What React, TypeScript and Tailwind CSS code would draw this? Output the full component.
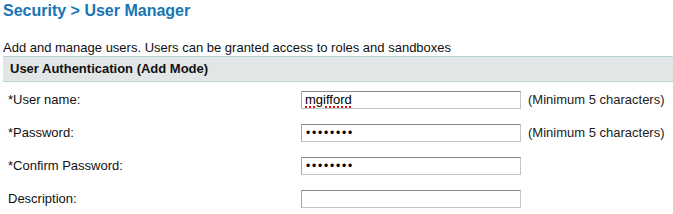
import React from "react";

function Field({ children }: { children?: React.ReactNode }) {
  return (
    <div className="w-[220px] h-[18px] border border-[#c4c4c4] border-t-[#8a8a8a] border-l-[#a8a8a8] bg-white flex items-center pl-[3px] text-[13px] leading-none text-black">
      {children}
    </div>
  );
}

function Row({ label, children, hint }: { label: string; children?: React.ReactNode; hint?: string }) {
  return (
    <div className="flex items-center h-[33px]">
      <div className="w-[298px] pl-[5px] text-[13px]">{label}</div>
      {children}
      {hint && <div className="ml-[7px] text-[13px] text-[#222]">{hint}</div>}
    </div>
  );
}

const dots = (
  <span className="text-[12px] tracking-[1.8px] leading-none pl-[1px]">••••••••</span>
);

export default function App() {
  return (
    <div className="w-[673px] h-[214px] bg-white overflow-hidden pl-[3px] text-[#111]" style={{ fontFamily: '"Liberation Sans", Arial, sans-serif' }}>
      <div className="pt-[1px] h-[40px] text-[16px] font-bold text-[#1874b3] leading-[20px]">Security &gt; User Manager</div>
      <div className="text-[13px] leading-[15px] h-[15px]">Add and manage users. Users can be granted access to roles and sandboxes</div>
      <div className="mt-[1px] h-[26px] bg-[#e2e6e6] border-y border-[#b6d2d5] flex items-center pl-[7px] text-[13px] font-bold text-[#111]">
        User Authentication (Add Mode)
      </div>
      <div className="pt-[1px]">
        <Row label="*User name:" hint="(Minimum 5 characters)">
          <Field>
            <span className="underline decoration-dotted decoration-[#e11] decoration-2 underline-offset-2">mgifford</span>
          </Field>
        </Row>
        <Row label="*Password:" hint="(Minimum 5 characters)">
          <Field>{dots}</Field>
        </Row>
        <Row label="*Confirm Password:">
          <Field>{dots}</Field>
        </Row>
        <Row label="Description:">
          <Field />
        </Row>
      </div>
    </div>
  );
}
